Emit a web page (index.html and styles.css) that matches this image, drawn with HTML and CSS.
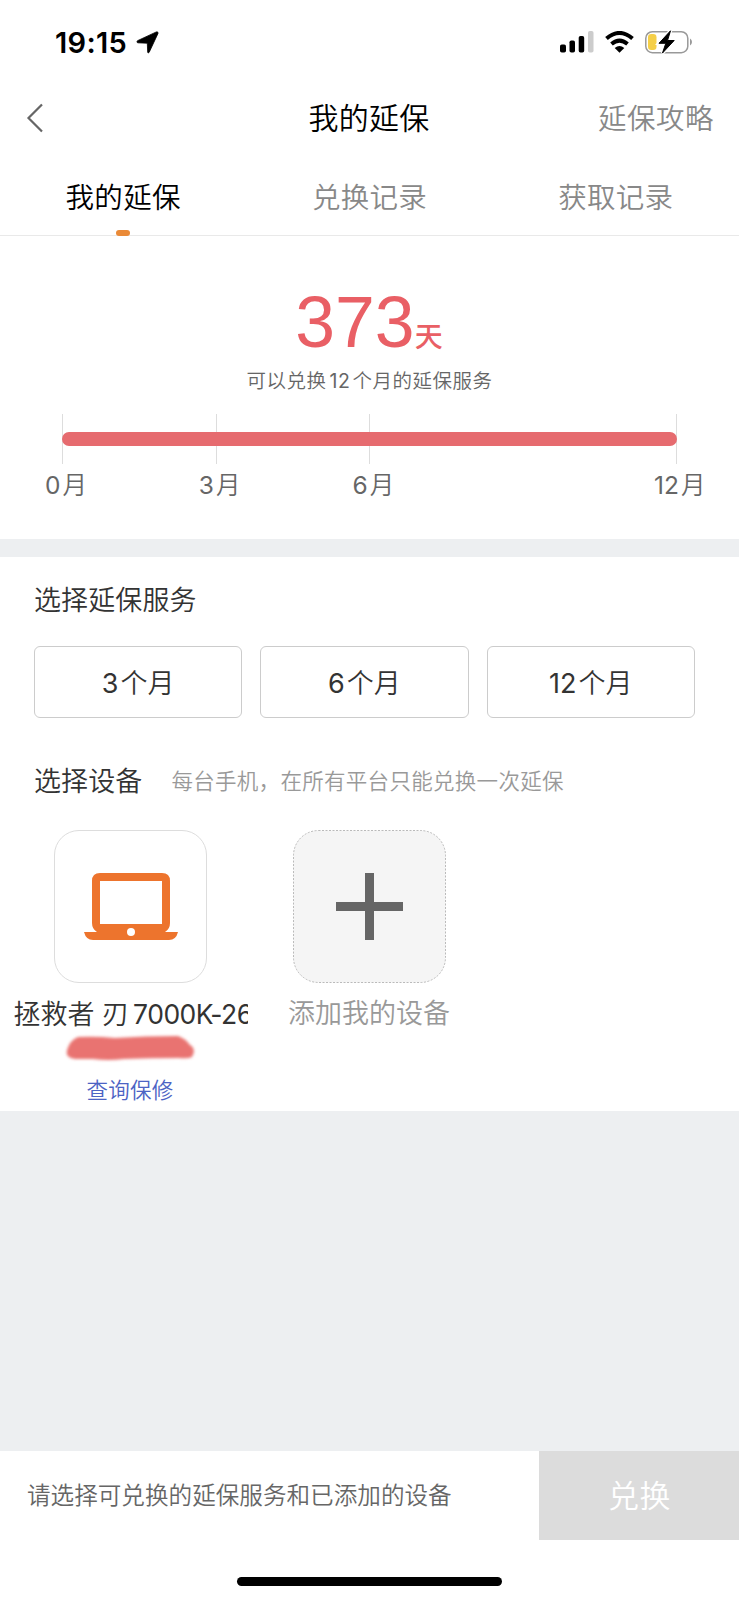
FILE: index.html
```html
<!DOCTYPE html>
<html lang="zh-CN">
<head>
<meta charset="utf-8">
<title>我的延保</title>
<link rel="stylesheet" href="styles.css">
</head>
<body>
<div class="screen">
  <header class="status">
    <div class="status-left">
      <span class="time">19:15</span>
      <svg class="location" width="23" height="23" viewBox="0 0 23 23"><path stroke="#000" stroke-width=".8" stroke-linejoin="round" d="M20.400.9 1.500 9.700Q.2 11.100 1.600 11.800L11.300 12.200 11.700 21.200Q12.200 22.800 13.200 21.300L22 2.400Q22.300.4 20.400.9Z"/></svg>
    </div>
    <div class="status-right">
      <svg width="34" height="22" viewBox="0 0 34 22"><rect x="0" y="13.500" width="6" height="8" rx="1.800"/><rect x="9.500" y="9.500" width="5.500" height="12" rx="1.800"/><rect x="18.700" y="5" width="5.500" height="16.500" rx="1.800"/><rect x="28" y="0" width="5.500" height="21.500" rx="1.800" fill="#ccc"/></svg>
      <svg width="29" height="22" viewBox="0 0 29 22"><path fill="none" stroke="#000" stroke-width="4" d="M1.500 7.600Q14.500-3.700 27.500 7.600M6.500 13Q14.500 6.300 22.500 13"/><path d="M14.500 21.700 9.700 16.900Q14.500 13 19.300 16.900Z"/></svg>
      <svg width="48" height="24" viewBox="0 0 48 24"><rect x=".8" y="1.700" width="42" height="21" rx="6.500" fill="none" stroke="#999" stroke-width="1.500"/><path d="M45 8.500Q47 9.500 47 12t-2 3.500Z" fill="#999"/><rect x="3" y="4" width="8.500" height="16" rx="3.300" fill="#f5cf48"/><path d="M25.500.8 14 13.300h6.800L17.500 23 29.200 10.500H22.500Z" stroke="#fff" stroke-width="3.500"/><path d="M25.500.8 14 13.300h6.800L17.500 23 29.200 10.500H22.500Z" stroke="#000" stroke-width="1" stroke-linejoin="round"/></svg>
    </div>
  </header>

  <nav class="navbar">
    <a class="back"><svg width="18" height="30" viewBox="0 0 18 30"><path d="M16 1.500 2.500 15 16 28.500" fill="none" stroke="#666" stroke-width="2.200"/></svg></a>
    <h1 class="title">我的延保</h1>
    <a class="guide">延保攻略</a>
  </nav>

  <nav class="tabs">
    <a class="tab tab-active">我的延保</a>
    <a class="tab">兑换记录</a>
    <a class="tab">获取记录</a>
  </nav>

  <section class="summary">
    <div class="days"><span class="days-num">373</span><span class="days-unit">天</span></div>
    <p class="days-note">可以兑换<span class="num">12</span>个月的延保服务</p>
    <div class="timeline">
      <div class="ticks"><i></i><i></i><i></i></div>
      <div class="progress"></div>
    </div>
    <div class="labels"><span><b>0</b>月</span><span><b>3</b>月</span><span><b>6</b>月</span><span class="label-last"><b>12</b>月</span></div>
  </section>

  <main class="panel">
    <h2 class="heading">选择延保服务</h2>
    <div class="options">
      <button class="option"><b>3</b>个月</button>
      <button class="option"><b>6</b>个月</button>
      <button class="option"><b>12</b>个月</button>
    </div>
    <div class="device-head"><h2 class="heading">选择设备</h2><span class="hint">每台手机，在所有平台只能兑换一次延保</span></div>
    <div class="devices">
      <div class="device">
        <div class="tile tile-device">
          <svg width="94" height="68" viewBox="0 0 94 68"><path fill="#ed742d" fill-rule="evenodd" d="M16 0H78Q86 0 86 8V50Q86 56 81 59H94Q92 67 85 67H9Q2 67 0 59H13Q8 56 8 50V8Q8 0 16 0ZM16 8V51H78V8Z"/><circle cx="47" cy="59" r="4" fill="#fff"/></svg>
        </div>
        <div class="device-name">拯救者 刃<span class="model">7000K-26</span></div>
        <svg class="redaction" width="140" height="34" viewBox="0 0 140 34"><defs><filter id="soft"><feGaussianBlur stdDeviation="1.500"/></filter></defs><path filter="url(#soft)" fill="#e97371" d="M18 4Q35 3 55 5Q85 3 118 3Q126 6 129 11Q137 16 132 24Q128 26 119 25Q90 25 64 26Q48 28 33 26L15 26Q5 25 7 17Q10 7 18 4Z"/></svg>
        <a class="warranty">查询保修</a>
      </div>
      <div class="device">
        <div class="tile tile-add">
          <svg width="153" height="153" viewBox="0 0 153 153"><rect x=".5" y=".5" width="152" height="152" rx="25" fill="#f5f5f5" stroke="#aaa" stroke-width=".8" stroke-dasharray="2 1.500"/><path d="M72 43h9v29h29v9H81v29h-9V81H43v-9h29Z" fill="#666"/></svg>
        </div>
        <div class="device-name device-name-add">添加我的设备</div>
      </div>
    </div>
  </main>

  <footer class="footer">
    <div class="action-bar">
      <span class="prompt">请选择可兑换的延保服务和已添加的设备</span>
      <button class="redeem">兑换</button>
    </div>
    <div class="home"></div>
  </footer>
</div>
</body>
</html>
```

FILE: styles.css
```css
* { box-sizing: border-box; }
body {
  margin: 0;
  background: #fff;
  font-family: Inter, "Noto Sans CJK SC", sans-serif;
  font-weight: 350;
  color: #333;
}
h1, h2, p { margin: 0; font-weight: inherit; }
b, .num, .model { font-weight: 400; }
button { font: inherit; color: inherit; padding: 0; }
svg { display: block; }
.screen { width: 739px; height: 1600px; display: flex; flex-direction: column; overflow: hidden; background: #edeff1; }

.status { height: 84px; flex: none; background: #fff; display: flex; justify-content: space-between; align-items: center; padding: 0 46px 0 55px; }
.status-left { display: flex; align-items: center; gap: 9px; }
.time { font-size: 29px; font-weight: 600; letter-spacing: .3px; line-height: 34px; padding-top: 1px; color: #000; }
.status-right { display: flex; align-items: center; gap: 11px; }

.navbar { height: 68px; flex: none; background: #fff; display: grid; grid-template-columns: 1fr auto 1fr; align-items: center; padding: 0 25px 0 26px; }
.title { font-size: 30px; letter-spacing: .3px; margin-left: -2px; line-height: 40px; color: #000; }
.guide { justify-self: end; font-size: 28.500px; letter-spacing: .5px; line-height: 40px; padding-top: 2px; color: #888; }

.tabs { height: 84px; flex: none; background: #fff; border-bottom: 1px solid #e9e9e9; display: grid; grid-template-columns: repeat(3, 1fr); grid-template-rows: 83px; }
.tab { position: relative; text-align: center; font-size: 28.500px; letter-spacing: .3px; line-height: 92px; color: #888; }
.tab-active { color: #000; }
.tab-active::after { content: ""; position: absolute; left: 50%; bottom: -1px; width: 14px; height: 6px; margin-left: -7px; border-radius: 3px; background: #ea8a37; }

.summary { height: 303px; flex: none; background: #fff; padding-top: 44px; }
.days { height: 84px; display: flex; justify-content: center; align-items: baseline; color: #e95f65; margin-left: -1px; }
.days-num { font-family: "Liberation Sans", Arial, sans-serif; font-weight: 400; font-size: 71.500px; line-height: 84px; }
.days-unit { font-size: 28px; font-weight: 500; line-height: 40px; }
.days-note { margin-top: 3px; text-align: center; font-size: 19.500px; letter-spacing: .5px; line-height: 28px; color: #666; }
.num { margin: 0 2px 0 3px; }
.timeline { position: relative; width: 615px; height: 50px; margin: 19px 0 0 62px; }
.ticks { height: 50px; display: grid; grid-template-columns: 1fr 1fr 2fr; border-right: 1px solid #ddd; }
.ticks i { border-left: 1px solid #ddd; }
.progress { position: absolute; left: 0; top: 18px; width: 615px; height: 14px; border-radius: 7px; background: #e66b6f; }
.labels { width: 615px; margin-left: 62px; margin-top: 3px; display: grid; grid-template-columns: 1fr 1fr 2fr 0; font-size: 24.500px; line-height: 36px; color: #666; }
.labels b { margin-right: 2px; }
.labels span { margin-left: -17px; white-space: nowrap; }
.labels .label-last { margin-left: -23px; }

.panel { height: 554px; flex: none; margin-top: 18px; background: #fff; }
.heading { font-size: 27px; letter-spacing: .1px; line-height: 40px; color: #333; }
.panel > .heading { padding: 24px 0 0 34px; }
.options { display: grid; grid-template-columns: repeat(3, 1fr); gap: 18px; padding: 25px 44px 0 34px; }
.option { height: 72px; border: 1px solid #ccc; border-radius: 6px; background: #fff; font-size: 27px; padding-bottom: 2px; }
.option b { margin-right: 2px; }
.device-head { display: flex; align-items: center; gap: 29px; padding: 43px 0 0 34px; }
.device-head .heading { padding-top: 1px; }
.hint { font-size: 21.500px; letter-spacing: .3px; color: #999; white-space: nowrap; line-height: 38px; margin-top: -2px; }
.devices { display: flex; gap: 5px; padding: 28px 0 0 13px; }
.device { width: 234px; display: flex; flex-direction: column; align-items: center; }
.tile { width: 153px; height: 153px; border: 1px solid #ddd; border-radius: 25px; display: flex; align-items: center; justify-content: center; }
.tile-device { padding-left: 2px; }
.tile-add { border: 0; }
.device-name { width: 235px; margin-top: 11px; padding-left: 1px; overflow: hidden; white-space: nowrap; font-size: 27px; line-height: 40px; color: #333; }
.model { font-size: 26.500px; margin-left: 4px; letter-spacing: -.5px; }
.device-name-add { padding: 0; text-align: center; color: #999; }
.redaction { margin-top: -2px; }
.warranty { margin-top: 7px; font-size: 21.500px; letter-spacing: .3px; line-height: 32px; color: #4c63c4; }

.footer { height: 149px; flex: none; margin-top: auto; background: #fff; display: flex; flex-direction: column; align-items: center; }
.action-bar { width: 100%; height: 89px; display: flex; align-items: stretch; justify-content: space-between; }
.prompt { padding-left: 27px; font-size: 23.600px; line-height: 90px; color: #666; }
.redeem { width: 200px; border: 0; padding: 0 0 4px 1px; background: #dcdcdc; color: #fff; font-size: 31px; letter-spacing: .5px; }
.home { width: 265px; height: 9px; margin: 37px 0 0; border-radius: 5px; background: #000; }
```
